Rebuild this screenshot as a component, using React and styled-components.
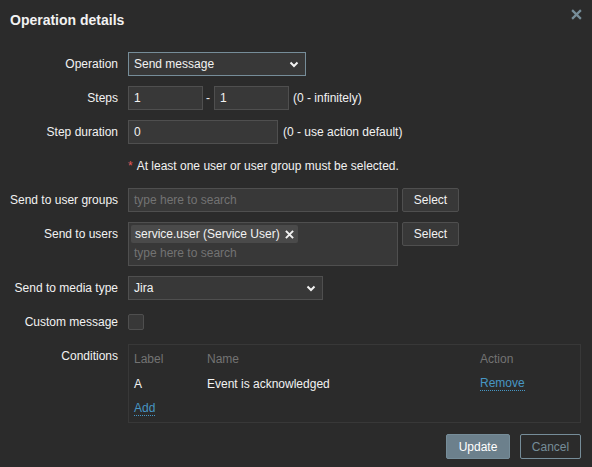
import React from 'react';
import styled, { createGlobalStyle } from 'styled-components';

const GlobalStyle = createGlobalStyle`
  body {
    margin: 0;
    background: #2b2b2b;
    color: #f2f2f2;
    font-family: "Liberation Sans", Arial, sans-serif;
    font-size: 12px;
  }
`;

const Dialog = styled.div`
  position: relative;
  width: 592px;
  height: 467px;
  box-sizing: border-box;
  padding: 0 11px 0 10px;
  background: #2b2b2b;
`;

const Header = styled.div`
  height: 52px;
  box-sizing: border-box;
  padding-top: 11px;
`;

const Title = styled.h4`
  margin: 0;
  font-size: 14px;
  font-weight: bold;
  line-height: 18px;
  color: #f2f2f2;
`;

const Close = styled.button`
  position: absolute;
  top: 7px;
  right: 9px;
  width: 14px;
  height: 14px;
  padding: 0;
  border: 0;
  background: none;
  display: flex;
  align-items: center;
  justify-content: center;
`;

const Form = styled.div`
  display: grid;
  grid-template-columns: 108px 1fr;
  column-gap: 10px;
  row-gap: 10px;
`;

const Label = styled.div`
  text-align: right;
  line-height: 24px;
  white-space: nowrap;
`;

const Field = styled.div`
  display: flex;
  align-items: ${(p) => (p.$top ? 'flex-start' : 'center')};
  min-height: 24px;
  gap: ${(p) => p.$gap || 0}px;
`;

const Input = styled.div`
  box-sizing: border-box;
  width: ${(p) => p.$w}px;
  height: 24px;
  padding: 0 5px;
  background: #383838;
  border: 1px solid #4f4f4f;
  line-height: 22px;
  color: ${(p) => (p.$placeholder ? '#737373' : '#f2f2f2')};
`;

const Select = styled.div`
  box-sizing: border-box;
  width: ${(p) => p.$w}px;
  height: 24px;
  padding: 0 6px 0 5px;
  background: #383838;
  border: 1px solid ${(p) => (p.$focus ? '#768d99' : '#4f4f4f')};
  display: flex;
  align-items: center;
  justify-content: space-between;
`;

const Hint = styled.span`
  color: #f2f2f2;
  white-space: nowrap;
  margin-left: ${(p) => p.$ml || 0}px;
`;

const Dash = styled.span`
  margin: 0 4px 0 3px;
`;

const Asterisk = styled.span`
  color: #e45959;
  margin-right: 4px;
`;

const AltButton = styled.button`
  box-sizing: border-box;
  height: 24px;
  width: 57px;
  padding: 0;
  background: #383838;
  border: 1px solid #4f4f4f;
  border-radius: 2px;
  color: #f2f2f2;
  font: inherit;
`;

const MultiBox = styled.div`
  box-sizing: border-box;
  width: 270px;
  height: 44px;
  padding: 2px 2px 0 2px;
  background: #383838;
  border: 1px solid #4f4f4f;
`;

const Chip = styled.span`
  display: inline-flex;
  align-items: center;
  height: 18px;
  padding: 0 4px;
  gap: 5px;
  background: #4a4a4a;
  border-radius: 2px;
  line-height: 18px;
`;

const Placeholder = styled.div`
  color: #737373;
  line-height: 20px;
  padding-left: 3px;
`;

const Checkbox = styled.span`
  box-sizing: border-box;
  width: 16px;
  height: 16px;
  background: #383838;
  border: 1px solid #4f4f4f;
  border-radius: 2px;
`;

const Table = styled.div`
  box-sizing: border-box;
  width: 453px;
  height: 79px;
  padding: 1px 5px 0;
  border: 1px solid #383838;
  display: grid;
  grid-template-columns: 73px 273px 1fr;
  grid-auto-rows: 25px;
  align-items: center;
`;

const Th = styled.div`
  color: #737373;
`;

const Link = styled.a`
  justify-self: start;
  color: #4796c4;
  text-decoration: none;
  border-bottom: 1px dotted #4796c4;
  line-height: 14px;
  cursor: pointer;
`;

const Footer = styled.div`
  display: flex;
  justify-content: flex-end;
  gap: 10px;
  margin-top: 11px;
`;

const Button = styled.button`
  box-sizing: border-box;
  height: 25px;
  width: ${(p) => p.$w}px;
  padding: 0;
  border-radius: 2px;
  font: inherit;
  font-size: 12px;
  border: 1px solid #768d99;
  background: ${(p) => (p.$primary ? '#6c808c' : 'transparent')};
  color: ${(p) => (p.$primary ? '#ffffff' : '#768d99')};
`;

const Chevron = () => (
  <svg width="10" height="7" viewBox="0 0 10 7">
    <path d="M1.5 1.5 L5 5 L8.5 1.5" stroke="#f2f2f2" strokeWidth="2" fill="none" />
  </svg>
);

const Cross = ({ size = 10, color = '#768d99', w = 2 }) => (
  <svg width={size} height={size} viewBox="0 0 10 10">
    <path d="M1 1 L9 9 M9 1 L1 9" stroke={color} strokeWidth={w} fill="none" />
  </svg>
);

export default function App() {
  return (
    <Dialog>
      <GlobalStyle />
      <Header>
        <Title>Operation details</Title>
        <Close>
          <Cross size={11} />
        </Close>
      </Header>

      <Form>
        <Label>Operation</Label>
        <Field>
          <Select $w={178} $focus>
            <span>Send message</span>
            <Chevron />
          </Select>
        </Field>

        <Label>Steps</Label>
        <Field>
          <Input $w={75}>1</Input>
          <Dash>-</Dash>
          <Input $w={75}>1</Input>
          <Hint $ml={4}>(0 - infinitely)</Hint>
        </Field>

        <Label>Step duration</Label>
        <Field $gap={5}>
          <Input $w={150}>0</Input>
          <Hint>(0 - use action default)</Hint>
        </Field>

        <Label />
        <Field>
          <Hint>
            <Asterisk>*</Asterisk>At least one user or user group must be selected.
          </Hint>
        </Field>

        <Label>Send to user groups</Label>
        <Field $gap={4}>
          <Input $w={270} $placeholder>type here to search</Input>
          <AltButton>Select</AltButton>
        </Field>

        <Label>Send to users</Label>
        <Field $gap={4} $top>
          <MultiBox>
            <Chip>
              service.user (Service User)
              <Cross size={9} color="#f2f2f2" w={2.2} />
            </Chip>
            <Placeholder>type here to search</Placeholder>
          </MultiBox>
          <AltButton>Select</AltButton>
        </Field>

        <Label>Send to media type</Label>
        <Field>
          <Select $w={195}>
            <span>Jira</span>
            <Chevron />
          </Select>
        </Field>

        <Label>Custom message</Label>
        <Field>
          <Checkbox />
        </Field>

        <Label>Conditions</Label>
        <Field $top>
          <Table>
            <Th>Label</Th>
            <Th>Name</Th>
            <Th>Action</Th>
            <div>A</div>
            <div>Event is acknowledged</div>
            <Link>Remove</Link>
            <Link>Add</Link>
          </Table>
        </Field>
      </Form>

      <Footer>
        <Button $primary $w={64}>Update</Button>
        <Button $w={61}>Cancel</Button>
      </Footer>
    </Dialog>
  );
}
